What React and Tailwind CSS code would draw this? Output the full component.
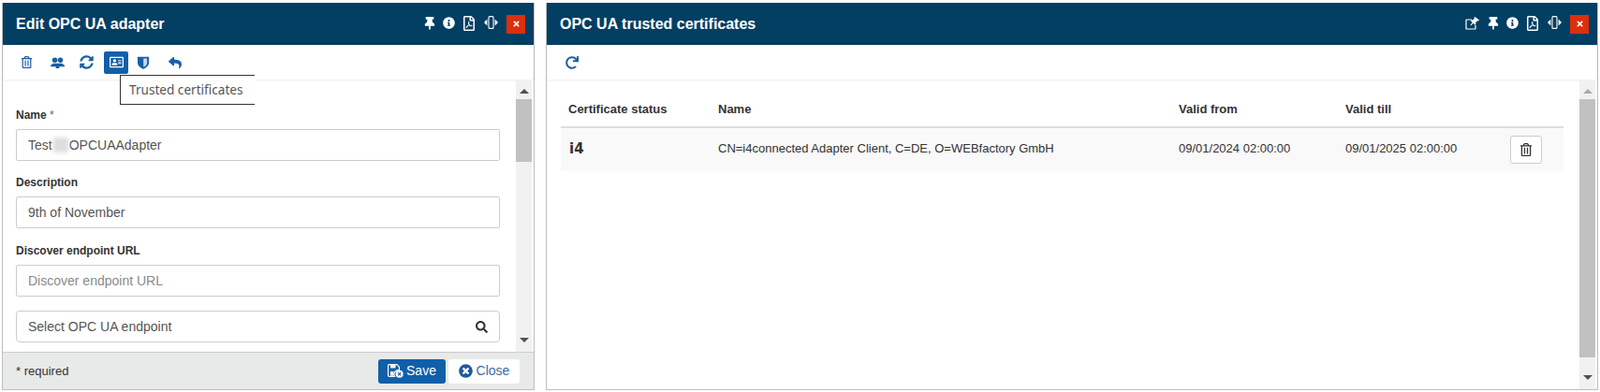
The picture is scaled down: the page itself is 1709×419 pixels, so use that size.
import { FaThumbtack, FaInfoCircle, FaRegFilePdf, FaTimes, FaRegTrashAlt, FaSyncAlt, FaRegAddressCard, FaReply, FaTimesCircle, FaSearch, FaRedo } from "react-icons/fa";

const ResizeIcon = () => (
  <svg width="15" height="14" viewBox="0 0 15 14" fill="currentColor">
    <path d="M0 7 3.4 3.6v6.8zM15 7l-3.4-3.4v6.8z" />
    <rect x="5" y="0.6" width="5" height="12.8" rx="1" fill="none" stroke="currentColor" strokeWidth="1.1" />
  </svg>
);

const ShareIcon = () => (
  <svg width="15" height="14" viewBox="0 0 15 14" fill="currentColor">
    <path d="M7 3H1.6a.6.6 0 0 0-.6.6v8.8c0 .3.3.6.6.6h8.8c.3 0 .6-.3.6-.6V9" fill="none" stroke="currentColor" strokeWidth="1.2" />
    <path d="M10.5 0 15 3.6l-1 1-1-.3-1.8 2 .2 1.6-.9.8-1.8-1.9L6 9.5l-.6-.4 2.2-3.2L5.8 4l.9-.8 1.5.3 1.7-2.1-.4-.9z" />
  </svg>
);

const UsersIcon = () => (
  <svg width="15" height="12" viewBox="0 0 16 13" fill="currentColor">
    <circle cx="4.8" cy="3.6" r="3" />
    <circle cx="11.2" cy="3.6" r="3" />
    <path d="M0 9.4 3 7.4h10l3 2V11H10v2H6v-2H0z" />
  </svg>
);

const ShieldIcon = () => (
  <svg width="12" height="14" viewBox="0 0 12 14" fill="currentColor">
    <path d="M0 .8h12v6.6c0 3-3.6 5.2-6 6.4-2.4-1.2-6-3.4-6-6.4z" />
    <path d="M6.2 2.6h3.9v4.8c0 1.8-2.2 3.3-3.9 4.2z" fill="#c9d9ea" />
  </svg>
);

const SaveIcon = () => (
  <svg width="17" height="15" viewBox="0 0 17 15" fill="currentColor">
    <path d="M1.6.6h8.2l2.6 2.6v3.4a4.6 4.6 0 0 0-4.9 6.8H1.6a1 1 0 0 1-1-1V1.6a1 1 0 0 1 1-1z" fill="none" stroke="currentColor" strokeWidth="1.2" />
    <rect x="3" y="1" width="5.5" height="3.4" />
    <rect x="3" y="8" width="3.4" height="4.6" />
    <circle cx="12.6" cy="10.8" r="4" />
    <path d="m11 9.2 3.2 3.2m0-3.2L11 12.4" stroke="#0f60a8" strokeWidth="1.2" />
  </svg>
);

const HeaderIcons = ({ share = false }) => (
  <div className="flex items-center text-white">
    {share && <div className="mr-[3px] flex w-5 justify-center pb-[2px]"><ShareIcon /></div>}
    <div className="flex w-5 justify-center pb-[2px]"><FaThumbtack className="text-[14px]" /></div>
    <div className="mr-[2px] flex w-5 justify-center pb-[2px]"><FaInfoCircle className="text-[13px]" /></div>
    <div className="mr-[3px] flex w-5 justify-center pb-[2px]"><FaRegFilePdf className="text-[16px]" /></div>
    <div className="mr-[7px] flex w-5 justify-center pb-[4px]"><ResizeIcon /></div>
    <button className="flex h-5 w-5 items-center justify-center bg-[#dc2f0c] text-white">
      <FaTimes className="text-[9px]" />
    </button>
  </div>
);

const Scrollbar = ({ thumb, arrow }) => (
  <div className="mr-[2px] flex w-[17px] shrink-0 flex-col items-center bg-[#f1f1f1]">
    <div className={`mt-[10px] h-0 w-0 border-x-[5px] border-b-[5px] border-x-transparent ${arrow}`} />
    <div className={`mt-[6px] w-full bg-[#c1c1c1] ${thumb}`} />
    <div className="mb-[10px] mt-auto h-0 w-0 border-x-[5px] border-t-[5px] border-x-transparent border-t-[#505050]" />
  </div>
);

const Field = ({ label, required, className = "mb-[15px]", children }) => (
  <div className={className}>
    <div className="mb-[7px] text-[12px] font-bold leading-[16px] text-[#333]">
      {label}
      {required && <span className="font-normal text-[#666]"> *</span>}
    </div>
    {children}
  </div>
);

const inputClass = "block h-[34px] w-full rounded-[2px] border border-[#ccc] bg-white px-3 text-[14px] text-[#555] outline-none placeholder:text-[#8a8a8a]";

const ToolIcon = ({ active, className = "", children }) => (
  <button className={`flex h-6 w-[26px] items-center justify-center rounded-[2px] ${active ? "bg-[#0f60a8] text-white" : "text-[#1a5fa5]"} ${className}`}>
    {children}
  </button>
);

const App = () => {
  return (
    <div className="flex h-[419px] w-[1709px] gap-[12px] bg-white pb-[2px] pl-[2px] pr-[2px] pt-[3px] font-['Liberation_Sans',Arial,sans-serif] text-[#333]">
      <div className="relative flex w-[569px] shrink-0 flex-col border-x border-b border-[#bdbdbd]">
        <div className="flex h-[45px] shrink-0 items-center justify-between bg-[#033f63] pl-[14px] pr-[9px]">
          <h1 className="text-[16px] font-bold text-white">Edit OPC UA adapter</h1>
          <HeaderIcons />
        </div>
        <div className="flex h-[37px] shrink-0 items-center pl-[12px] shadow-[0_1px_2px_rgba(0,0,0,0.08)]">
          <ToolIcon><FaRegTrashAlt className="text-[13px]" /></ToolIcon>
          <ToolIcon className="ml-[7px]"><UsersIcon /></ToolIcon>
          <ToolIcon className="ml-[5px]"><FaSyncAlt className="text-[15px]" /></ToolIcon>
          <ToolIcon active className="ml-[6px]"><FaRegAddressCard className="text-[15px]" /></ToolIcon>
          <ToolIcon className="ml-[3px]"><ShieldIcon /></ToolIcon>
          <ToolIcon className="ml-[8px]"><FaReply className="text-[14px]" /></ToolIcon>
        </div>
        <div className="absolute left-[125px] top-[77px] z-10 flex h-[32px] w-[144px] items-center border-y border-l border-[#333] bg-white pl-[9px] font-['Noto_Sans',sans-serif] text-[13.6px] text-[#555]">
          Trusted certificates
        </div>
        <div className="flex min-h-0 flex-1">
          <div className="min-w-0 flex-1 overflow-hidden pl-[14px] pr-[17px] pt-[30px]">
            <Field label="Name" required>
              <div className={`${inputClass} flex items-center`}>
                Test
                <span className="mx-[1px] h-[16px] w-[16px] bg-[#ddd] blur-[2px]" />
                OPCUAAdapter
              </div>
            </Field>
            <Field label="Description" className="mb-[16px]">
              <input className={inputClass} defaultValue="9th of November" />
            </Field>
            <Field label="Discover endpoint URL">
              <input className={inputClass} placeholder="Discover endpoint URL" />
            </Field>
            <div className="flex h-[34px] items-center justify-between rounded-[4px] border border-[#ccc] px-3 text-[14px] text-[#555]">
              <span>Select OPC UA endpoint</span>
              <FaSearch className="text-[13px] text-[#333]" />
            </div>
          </div>
          <Scrollbar thumb="h-[67px]" arrow="border-b-[#505050]" />
        </div>
        <div className="flex h-[40px] shrink-0 items-center justify-between border-t border-[#ccc] bg-[#e8eaea] pl-[14px] pr-[15px]">
          <span className="text-[13px]">* required</span>
          <div className="flex gap-[3px]">
            <button className="flex h-[26px] w-[72px] items-center justify-center gap-[3px] rounded-[3px] bg-[#0f60a8] text-[14px] text-white">
              <SaveIcon />
              Save
            </button>
            <button className="flex h-[26px] w-[76px] items-center justify-center gap-[4px] rounded-[3px] bg-white text-[14px] text-[#3a6aa5]">
              <FaTimesCircle className="text-[15px] text-[#1f5a9e]" />
              Close
            </button>
          </div>
        </div>
      </div>

      <div className="flex min-w-0 flex-1 flex-col border-x border-b border-[#bdbdbd]">
        <div className="flex h-[45px] shrink-0 items-center justify-between bg-[#033f63] pl-[14px] pr-[9px]">
          <h1 className="text-[16px] font-bold text-white">OPC UA trusted certificates</h1>
          <HeaderIcons share />
        </div>
        <div className="flex h-[37px] shrink-0 items-center pl-[20px] text-[#1a5fa5] shadow-[0_1px_2px_rgba(0,0,0,0.08)]">
          <FaRedo className="text-[14px]" />
        </div>
        <div className="flex min-h-0 flex-1">
          <div className="min-w-0 flex-1 pl-[15px] pr-[17px] pt-[16px]">
            <table className="w-full table-fixed border-collapse">
              <thead>
                <tr className="h-[35px] border-b-2 border-[#ddd] text-left text-[13px]">
                  <th className="w-[160px] pb-[3px] pl-2 font-bold">Certificate status</th>
                  <th className="w-[492px] pb-[3px] pl-2 font-bold">Name</th>
                  <th className="w-[178px] pb-[3px] pl-2 font-bold">Valid from</th>
                  <th className="w-[176px] pb-[3px] pl-2 font-bold">Valid till</th>
                  <th></th>
                </tr>
              </thead>
              <tbody>
                <tr className="h-[47px] bg-[#f9f9f9] text-[13px]">
                  <td className="pb-[2px] pl-[9px] font-['DejaVu_Sans',sans-serif] text-[15px] font-bold">i4</td>
                  <td className="pb-[2px] pl-2">CN=i4connected Adapter Client, C=DE, O=WEBfactory GmbH</td>
                  <td className="pb-[2px] pl-2">09/01/2024 02:00:00</td>
                  <td className="pb-[2px] pl-2">09/01/2025 02:00:00</td>
                  <td className="pl-2">
                    <button className="flex h-[30px] w-[34px] items-center justify-center rounded-[3px] border border-[#ccc] bg-white text-[#333]">
                      <FaRegTrashAlt className="text-[14px]" />
                    </button>
                  </td>
                </tr>
              </tbody>
            </table>
          </div>
          <Scrollbar thumb="h-[276px]" arrow="border-b-[#aaa]" />
        </div>
      </div>
    </div>
  );
};

export default App;
